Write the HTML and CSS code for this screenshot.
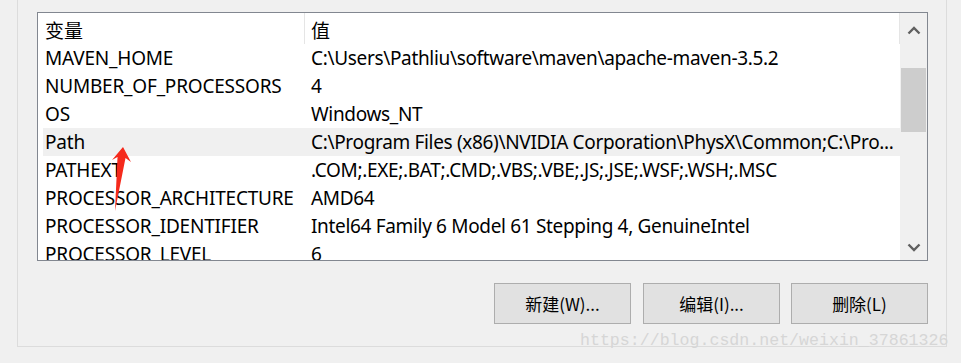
FILE: index.html
```html
<!DOCTYPE html>
<html lang="zh-CN">
<head>
<meta charset="utf-8">
<title>环境变量</title>
<link rel="stylesheet" href="styles.css">
</head>
<body>
<div class="frame">
  <div class="listbox">
    <div class="list">
      <div class="header">
        <div class="hcell hname">变量</div>
        <div class="hsep"></div>
        <div class="hcell hvalue">值</div>
      </div>
      <div class="row"><div class="cell name">MAVEN_HOME</div><div class="cell value">C:\Users\Pathliu\software\maven\apache-maven-3.5.2</div></div>
      <div class="row"><div class="cell name">NUMBER_OF_PROCESSORS</div><div class="cell value">4</div></div>
      <div class="row"><div class="cell name">OS</div><div class="cell value">Windows_NT</div></div>
      <div class="row selected"><div class="cell name">Path</div><div class="cell value">C:\Program Files (x86)\NVIDIA Corporation\PhysX\Common;C:\Pro...</div></div>
      <div class="row"><div class="cell name">PATHEXT</div><div class="cell value">.COM;.EXE;.BAT;.CMD;.VBS;.VBE;.JS;.JSE;.WSF;.WSH;.MSC</div></div>
      <div class="row"><div class="cell name">PROCESSOR_ARCHITECTURE</div><div class="cell value">AMD64</div></div>
      <div class="row"><div class="cell name">PROCESSOR_IDENTIFIER</div><div class="cell value">Intel64 Family 6 Model 61 Stepping 4, GenuineIntel</div></div>
      <div class="row"><div class="cell name">PROCESSOR_LEVEL</div><div class="cell value">6</div></div>
    </div>
    <div class="scrollbar">
      <div class="sbtn sbtn-up">
        <svg width="14" height="9" viewBox="0 0 14 9"><path d="M1.5 7.5 L7 2 L12.5 7.5" fill="none" stroke="#606060" stroke-width="2.4"/></svg>
      </div>
      <div class="track"><div class="thumb"></div></div>
      <div class="sbtn sbtn-down">
        <svg width="14" height="9" viewBox="0 0 14 9"><path d="M1.5 1.5 L7 7 L12.5 1.5" fill="none" stroke="#606060" stroke-width="2.4"/></svg>
      </div>
    </div>
  </div>
  <div class="buttons">
    <button class="btn">新建(W)...</button>
    <button class="btn">编辑(I)...</button>
    <button class="btn">删除(L)</button>
  </div>
</div>
<svg class="arrow" width="961" height="363" viewBox="0 0 961 363">
  <polygon points="123,147 131,162 125.5,158 115,211 117.5,157 112,160" fill="#f52a1c"/>
</svg>
<div class="watermark">https://blog.csdn.net/weixin_37861326</div>
</body>
</html>
```

FILE: styles.css
```css
html, body {
  margin: 0;
  padding: 0;
}
body {
  width: 961px;
  height: 363px;
  overflow: hidden;
  background: #f0f0f0;
  position: relative;
  font-family: "Noto Sans", "Noto Sans CJK SC", sans-serif;
  color: #000;
}
.frame {
  margin-left: 17px;
  width: 930px;
  height: 347px;
  border-left: 1px solid #dcdcdc;
  border-right: 1px solid #dcdcdc;
  border-bottom: 1px solid #dcdcdc;
  padding-left: 19px;
  padding-top: 12px;
  box-sizing: border-box;
}
.listbox {
  width: 891px;
  height: 249px;
  box-sizing: border-box;
  border: 1px solid #828790;
  background: #fff;
  display: flex;
}
.list {
  flex: 1;
  overflow: hidden;
  padding-left: 5px;
  font-size: 19px;
  white-space: nowrap;
}
.header {
  display: flex;
  height: 31px;
  align-items: stretch;
  border-right: 1px solid #e5e5e5;
  box-sizing: border-box;
}
.hcell {
  font-family: "Noto Sans CJK SC", sans-serif;
  font-size: 19px;
  line-height: 33px;
}
.hname {
  width: 261px;
  padding-left: 2px;
  box-sizing: border-box;
}
.hsep {
  width: 1px;
  background: #e5e5e5;
}
.hvalue {
  padding-left: 6px;
}
.row {
  display: grid;
  grid-template-columns: 266px 1fr;
  height: 28px;
  line-height: 28px;
}
.row.selected {
  background: #f0f0f0;
}
.cell {
  padding-left: 2px;
  overflow: hidden;
}
.name {
  letter-spacing: -0.2px;
}
.value {
  letter-spacing: -0.33px;
}
.scrollbar {
  width: 27px;
  background: #f0f0f0;
  display: flex;
  flex-direction: column;
}
.sbtn {
  display: flex;
  align-items: center;
  justify-content: center;
}
.sbtn-up {
  height: 34px;
}
.sbtn-down {
  height: 26px;
}
.track {
  flex: 1;
  padding-top: 21px;
}
.thumb {
  margin: 0 1px;
  height: 64px;
  background: #cdcdcd;
}
.buttons {
  width: 891px;
  display: flex;
  justify-content: flex-end;
  gap: 12px;
  margin-top: 22px;
}
.btn {
  width: 137px;
  height: 41px;
  background: #e1e1e1;
  border: 1px solid #adadad;
  font-family: "Noto Sans CJK SC", sans-serif;
  font-size: 17px;
  color: #000;
  padding: 0;
  margin: 0;
}
.btn:last-child {
  margin-left: -1px;
}
.arrow {
  position: absolute;
  left: 0;
  top: 0;
  pointer-events: none;
}
.watermark {
  position: absolute;
  left: 580px;
  top: 331px;
  font-family: "Liberation Mono", monospace;
  font-size: 16.6px;
  color: #d6d6d6;
  white-space: nowrap;
}
```
